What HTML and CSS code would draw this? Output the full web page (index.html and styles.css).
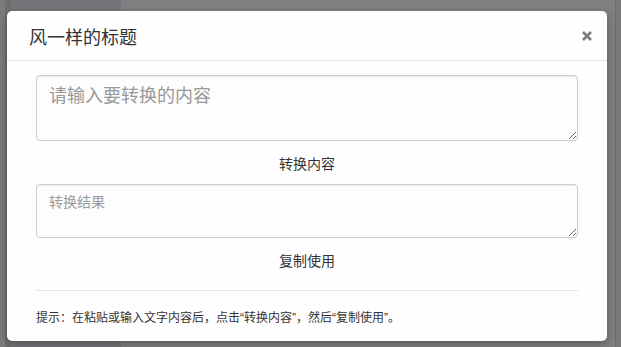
FILE: index.html
```html
<!DOCTYPE html>
<html lang="zh-CN">
<head>
    <meta charset="UTF-8">
    <meta name="viewport" content="width=device-width, initial-scale=1.0">
    <title>风一样的标题</title>
    <link rel="stylesheet" href="styles.css">
</head>
<body>
    <div class="backdrop">
        <div class="edge"></div>
        <div class="sidebar"></div>
        <div class="main"></div>
        <div class="scroll"></div>
    </div>

    <div class="modal">
        <div class="modal-header">
            <h4 class="modal-title">风一样的标题</h4>
            <button class="close" type="button" aria-label="关闭">
                <svg width="10" height="10" viewBox="0 0 10 10">
                    <path d="M1 1 L9 9 M9 1 L1 9" stroke="#7b7b7b" stroke-width="2.6" stroke-linecap="butt"/>
                </svg>
            </button>
        </div>
        <div class="modal-body">
            <textarea class="field field-big" placeholder="请输入要转换的内容"></textarea>
            <div class="action">转换内容</div>
            <textarea class="field field-small" placeholder="转换结果"></textarea>
            <div class="action">复制使用</div>
            <hr class="divider">
            <p class="tip">提示：在粘贴或输入文字内容后，点击“转换内容”，然后“复制使用”。</p>
        </div>
    </div>
</body>
</html>
```

FILE: styles.css
```css
body {
    margin: 0;
    font-family: "Noto Sans CJK SC", "Noto Sans", sans-serif;
    color: #333;
    overflow: hidden;
}

/* page behind the dimmed overlay */
.backdrop {
    display: flex;
    height: 347px;
}

.backdrop .edge {
    width: 5px;
    background-color: #7b7b7b;
    border-right: 6px solid #6e6e6e;
}

.backdrop .sidebar {
    width: 110px;
    background-color: #747578;
}

.backdrop .main {
    flex: 1;
    background-color: #808080;
}

.backdrop .scroll {
    width: 5px;
    background-color: #787878;
    border-left: 1px solid #6c6c6c;
}

.modal {
    position: absolute;
    left: 7px;
    top: 11px;
    width: 600px;
    height: 330px;
    background-color: #fefefe;
    border-radius: 5px;
    box-shadow: 0 3px 9px rgba(0, 0, 0, 0.3);
}

.modal-header {
    height: 49px;
    display: flex;
    align-items: center;
    justify-content: space-between;
    padding: 0 15px 0 22px;
    border-bottom: 1px solid #e5e5e5;
}

.modal-title {
    margin: 0;
    font-size: 18px;
    font-weight: normal;
    color: #333;
}

.close {
    display: flex;
    padding: 0;
    border: none;
    background: none;
    cursor: pointer;
}

.modal-body {
    padding: 14px 29px 0;
}

.field {
    display: block;
    width: 100%;
    box-sizing: border-box;
    padding: 6px 12px;
    border: 1px solid #ccc;
    border-radius: 4px;
    background-color: #fdfdfd;
    box-shadow: inset 0 1px 1px rgba(0, 0, 0, 0.075);
    font-family: "Noto Sans CJK SC", sans-serif;
    color: #555;
    resize: vertical;
}

.field::placeholder {
    color: #999;
}

.field-big {
    height: 66px;
    font-size: 18px;
    line-height: 25px;
}

.field-small {
    height: 54px;
    font-size: 14px;
    line-height: 20px;
}

.action {
    margin: 12px 0 11px;
    text-align: center;
    font-size: 14px;
    line-height: 20px;
    color: #333;
    cursor: pointer;
}

.divider {
    margin: 20px 0 0;
    border: none;
    border-top: 1px solid #e5e5e5;
}

.tip {
    margin: 19px 0 0;
    font-family: "Liberation Sans", "Noto Sans CJK SC", sans-serif;
    font-size: 12px;
    line-height: 17px;
    color: #333;
}
```
